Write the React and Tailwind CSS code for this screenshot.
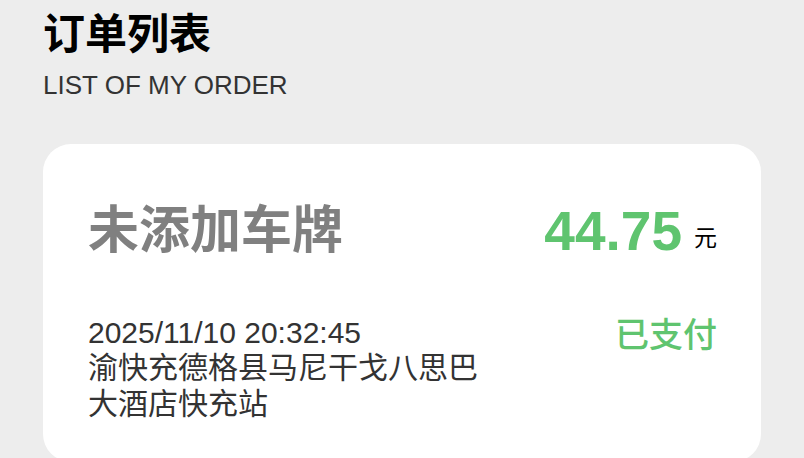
import React from 'react';

const order = {
  plate: '未添加车牌',
  amount: '44.75',
  time: '2025/11/10 20:32:45',
  station: '渝快充德格县马尼干戈八思巴大酒店快充站',
  status: '已支付',
};

const font = { fontFamily: '"Liberation Sans", "Noto Sans CJK SC", sans-serif' };

export default function App() {
  return (
    <div className="min-h-screen bg-[#ededed] pl-[43px] pr-[43px] pt-[12px]" style={font}>
      <h1 className="text-[42px] leading-[46px] font-bold text-black">订单列表</h1>
      <p className="mt-[13px] text-[26px] leading-[28px] text-[#333]">LIST OF MY ORDER</p>

      <div className="mt-[45px] bg-white rounded-[28px] pl-[45px] pr-[44px] pt-[59px] pb-[40px]">
        <div className="flex items-center justify-between">
          <span className="text-[51px] leading-[56px] font-bold text-[#808080]">{order.plate}</span>
          <span className="flex items-center">
            <span className="text-[55px] leading-[56px] font-bold text-[#5fc46f]">{order.amount}</span>
            <span className="ml-[12px] mt-[14px] text-[23px] leading-[24px] text-black">元</span>
          </span>
        </div>

        <div className="mt-[56px] flex justify-between items-start">
          <div className="w-[400px] text-[30px] leading-[35px] text-[#333]">
            <div>{order.time}</div>
            <div className="leading-[36px]">{order.station}</div>
          </div>
          <span className="mt-[1px] text-[34px] leading-[38px] font-medium text-[#5fc46f]">{order.status}</span>
        </div>
      </div>
    </div>
  );
}
